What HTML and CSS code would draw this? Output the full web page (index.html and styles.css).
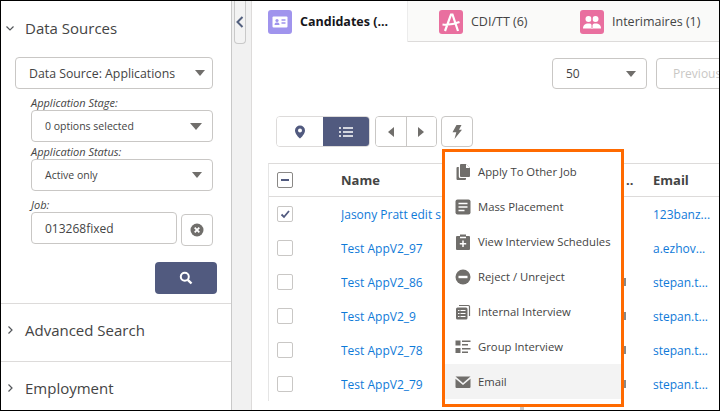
FILE: index.html
```html
<!DOCTYPE html>
<html lang="en">
<head>
<meta charset="utf-8">
<title>Candidates</title>
<link rel="stylesheet" href="styles.css">
</head>
<body>
<div class="frame">
  <aside class="sidebar">
    <section class="panel first">
      <h2 class="panel-title"><svg class="chev" viewBox="0 0 10 10"><path d="M1.500 3.500 5 7l3.500-3.500"/></svg>Data Sources</h2>
      <div class="select main-select"><span>Data Source: Applications</span><i class="caret"></i></div>
      <div class="fields">
        <label class="lbl">Application Stage:</label>
        <div class="select small"><span>0 options selected</span><i class="caret big"></i></div>
        <label class="lbl">Application Status:</label>
        <div class="select small"><span>Active only</span><i class="caret"></i></div>
        <label class="lbl job">Job:</label>
        <div class="job-row">
          <div class="select small job-input"><span>013268fixed</span></div>
          <button class="clear"><svg viewBox="0 0 14 14" width="14" height="14"><circle cx="7" cy="7" r="6.500" fill="#706e6b"/><path d="M4.700 4.700l4.600 4.600M9.300 4.700 4.700 9.300" stroke="#fff" stroke-width="1.800"/></svg></button>
        </div>
      </div>
      <div class="search-row"><button class="search"><svg viewBox="0 0 14 14" width="14" height="14"><circle cx="5.800" cy="5.800" r="4" fill="none" stroke="#fff" stroke-width="2"/><path d="M8.800 8.800 12.500 12.500" stroke="#fff" stroke-width="2.400"/></svg></button></div>
    </section>
    <section class="panel closed"><h2 class="panel-title"><svg class="chev" viewBox="0 0 10 10"><path d="M3.500 1.500 7 5 3.500 8.500"/></svg>Advanced Search</h2></section>
    <section class="panel closed last"><h2 class="panel-title"><svg class="chev" viewBox="0 0 10 10"><path d="M3.500 1.500 7 5 3.500 8.500"/></svg>Employment</h2></section>
  </aside>

  <div class="gutter"><div class="handle"><svg viewBox="0 0 8 12" width="8" height="12"><path d="M6.500 1 1.500 6l5 5" fill="none" stroke="#53607e" stroke-width="2"/></svg></div></div>

  <main class="main">
    <nav class="tabs">
      <div class="tab active">
        <span class="tab-icon purple"><svg viewBox="0 0 24 24" width="24" height="24"><rect x="4.500" y="6.500" width="15" height="11" rx="1" fill="#fff"/><circle cx="9" cy="10.500" r="1.600" fill="#a094ed"/><path d="M6.500 15c0-2 1.200-2.500 2.500-2.500s2.500.5 2.500 2.500z" fill="#a094ed"/><path d="M13.500 10h4M13.500 13h4" stroke="#a094ed" stroke-width="1.300"/></svg></span>
        <span class="tab-label">Candidates (...</span>
      </div>
      <div class="tab cdi">
        <span class="tab-icon pink"><svg viewBox="0 0 24 24" width="24" height="24"><path d="M6 21 12 4.500h1.500L19 21M3.500 14.500c6 .8 11-.2 17-2.500" fill="none" stroke="#fff" stroke-width="2.200"/></svg></span>
        <span class="tab-text">CDI/TT (6)</span>
      </div>
      <div class="tab inter">
        <span class="tab-icon pink"><svg viewBox="0 0 24 24" width="24" height="24"><g fill="#fff"><circle cx="8.500" cy="9" r="3"/><circle cx="15.500" cy="9" r="3"/><path d="M3 18.500c0-3.500 2-5 5.500-5s4 1.500 4 5z"/><path d="M11.500 18.500c0-3.500 1-5 4-5 3.500 0 5.500 1.500 5.500 5z"/></g><path d="M12 7v11" stroke="#e96f9f" stroke-width="1"/></svg></span>
        <span class="tab-text">Interimaires (1)</span>
      </div>
    </nav>

    <div class="pager">
      <div class="select pager-select"><span>50</span><i class="caret"></i></div>
      <button class="prev">Previous</button>
    </div>

    <div class="toolbar">
      <div class="btn-group views">
        <button class="view"><svg viewBox="0 0 12 14" width="12" height="14"><path fill="#515a7f" fill-rule="evenodd" d="M6 .5a5 5 0 0 1 5 5c0 3.300-3.600 7-5 8-1.400-1-5-4.700-5-8a5 5 0 0 1 5-5zm0 3a2 2 0 1 0 0 4 2 2 0 0 0 0-4z"/></svg></button>
        <button class="view on"><svg viewBox="0 0 14 10" width="14" height="10"><path d="M0 1h2M4 1h10M0 5h2M4 5h10M0 9h2M4 9h10" stroke="#fff" stroke-width="1.400"/></svg></button>
      </div>
      <div class="btn-group arrows">
        <button class="arrow"><i class="tri left"></i></button>
        <button class="arrow"><i class="tri right"></i></button>
      </div>
      <button class="bolt"><svg viewBox="0 0 10 14" width="10" height="14"><path fill="#706e6b" d="M4.500 0h5L7 4.800h3L2.500 14l1.800-6.800H.5z"/></svg></button>
    </div>

    <div class="table">
      <div class="row head">
        <div class="c-check"><span class="cb"><i class="dash"></i></span></div>
        <div class="c-name">Name</div>
        <div class="c-mid dots">..</div>
        <div class="c-email">Email</div>
      </div>
      <div class="row">
        <div class="c-check"><span class="cb"><svg viewBox="0 0 10 10" width="10" height="10"><path d="M1.500 5.500 4 8l5-6" fill="none" stroke="#515a7f" stroke-width="1.800"/></svg></span></div>
        <div class="c-name"><a>Jasony Pratt edit s</a></div>
        <div class="c-mid"></div>
        <div class="c-email"><a>123banz...</a></div>
      </div>
      <div class="row">
        <div class="c-check"><span class="cb"></span></div>
        <div class="c-name"><a>Test AppV2_97</a></div>
        <div class="c-mid"></div>
        <div class="c-email"><a>a.ezhov...</a></div>
      </div>
      <div class="row">
        <div class="c-check"><span class="cb"></span></div>
        <div class="c-name"><a>Test AppV2_86</a></div>
        <div class="c-mid"><i class="mark"></i></div>
        <div class="c-email"><a>stepan.t...</a></div>
      </div>
      <div class="row">
        <div class="c-check"><span class="cb"></span></div>
        <div class="c-name"><a>Test AppV2_9</a></div>
        <div class="c-mid"><i class="mark"></i></div>
        <div class="c-email"><a>stepan.t...</a></div>
      </div>
      <div class="row">
        <div class="c-check"><span class="cb"></span></div>
        <div class="c-name"><a>Test AppV2_78</a></div>
        <div class="c-mid"><i class="mark"></i></div>
        <div class="c-email"><a>stepan.t...</a></div>
      </div>
      <div class="row">
        <div class="c-check"><span class="cb"></span></div>
        <div class="c-name"><a>Test AppV2_79</a></div>
        <div class="c-mid"><i class="mark"></i></div>
        <div class="c-email"><a>stepan.t...</a></div>
      </div>
    </div>

    <ul class="menu">
      <li class="item"><svg viewBox="0 0 16 16" width="16" height="16"><path fill="#706e6b" d="M6 0h5l4 4v8a1 1 0 0 1-1 1H6a1 1 0 0 1-1-1V1a1 1 0 0 1 1-1zM3.800 3v9.500a1.500 1.500 0 0 0 1.500 1.500H11v1a1 1 0 0 1-1 1H2.500a1 1 0 0 1-1-1V4a1 1 0 0 1 1-1z"/><path fill="#fff" d="M11 0v4h4z"/></svg>Apply To Other Job</li>
      <li class="item"><svg viewBox="0 0 16 16" width="16" height="16"><rect x="0.500" y="0.500" width="15" height="15" rx="2" fill="#706e6b"/><path d="M3.500 4.500h9M3.500 8h9M3.500 11.500h6" stroke="#fff" stroke-width="1.500"/></svg>Mass Placement</li>
      <li class="item"><svg viewBox="0 0 16 16" width="16" height="16"><path fill="#706e6b" d="M2 2h3V.5h6V2h3a1 1 0 0 1 1 1v12a1 1 0 0 1-1 1H2a1 1 0 0 1-1-1V3a1 1 0 0 1 1-1z"/><path stroke="#fff" stroke-width="1.500" d="M8 6.500v6.500M4.800 9.800h6.400M5 3.500h6"/></svg>View Interview Schedules</li>
      <li class="item"><svg viewBox="0 0 16 16" width="16" height="16"><circle cx="8" cy="8" r="7.500" fill="#706e6b"/><rect x="3.500" y="6.800" width="9" height="2.400" fill="#fff"/></svg>Reject / Unreject</li>
      <li class="item"><svg viewBox="0 0 16 16" width="16" height="16"><path fill="none" stroke="#706e6b" stroke-width="1.200" d="M4 1.500h9.500a1 1 0 0 1 1 1V12"/><rect x="1" y="3.500" width="11.500" height="12" rx="1.500" fill="#706e6b"/><path stroke="#fff" stroke-width="1.100" d="M3 6.500h1.500M5.500 6.500h5M3 9.500h1.500M5.500 9.500h5M3 12.500h1.500M5.500 12.500h5"/></svg>Internal Interview</li>
      <li class="item"><svg viewBox="0 0 16 16" width="16" height="16"><g fill="#706e6b"><rect x="0.500" y="1.500" width="5" height="5"/><rect x="0.500" y="9" width="5" height="5"/><rect x="7" y="1.500" width="8.500" height="1.500"/><rect x="7" y="5" width="6" height="1.500"/><rect x="7" y="9" width="8.500" height="1.500"/><rect x="7" y="12.500" width="6" height="1.500"/></g></svg>Group Interview</li>
      <li class="item hover"><svg viewBox="0 0 16 16" width="16" height="16"><path fill="#706e6b" d="M0.500 2.500h15L8 9zM0.500 4.800 8 11l7.500-6.200V13a1 1 0 0 1-1 1h-13a1 1 0 0 1-1-1z"/></svg>Email</li>
    </ul>
    <i class="menu-tail"></i>
  </main>
</div>
</body>
</html>
```

FILE: styles.css
```css
* { box-sizing: border-box; }
html, body { margin: 0; padding: 0; }
body {
  width: 720px;
  height: 411px;
  overflow: hidden;
  background: #fff;
  font-family: "Open Sans", "Noto Sans", sans-serif;
  color: #3e3e3c;
}
.frame {
  display: flex;
  width: 720px;
  height: 411px;
  border: 1px solid #000;
  overflow: hidden;
  position: relative;
}
button { font: inherit; background: #fff; padding: 0; cursor: pointer; }

/* Sidebar */
.sidebar {
  width: 231px;
  flex: none;
  background: #fff;
  border-right: 1px solid #c9c9c9;
}
.panel-title {
  margin: 0;
  display: flex;
  align-items: center;
  font-size: 15px;
  font-weight: 400;
  line-height: 20px;
  color: #444;
}
.chev {
  width: 10px;
  height: 10px;
  margin: 0 10px 0 4px;
  fill: none;
  stroke: #53565a;
  stroke-width: 1.200;
}
.panel.first {
  padding-top: 17px;
  height: 303px;
  border-bottom: 1px solid #dddbda;
}
.panel.closed {
  height: 58px;
  padding-top: 16px;
  border-bottom: 1px solid #dddbda;
}
.panel.last { border-bottom: 0; }
.select {
  display: flex;
  align-items: center;
  justify-content: space-between;
  height: 32px;
  border: 1px solid #c9c7c5;
  border-radius: 4px;
  background: #fff;
  color: #444;
  font-size: 12px;
}
.main-select {
  width: 198px;
  margin: 19px 0 0 14px;
  padding: 0 7px 0 13px;
  font-size: 12.300px;
}
.fields { margin: 6px 0 0 30px; width: 182px; }
.lbl {
  display: block;
  font-size: 11px;
  font-style: italic;
  line-height: 15px;
  height: 15px;
  color: #444;
}
.select.small { padding: 0 10px 0 13px; font-size: 10.500px; margin-bottom: 2px; }
.lbl.job { margin-top: 6px; }
.job-row { display: flex; align-items: flex-start; gap: 4px; }
.select.job-input { width: 146px; font-size: 12px; margin-bottom: 0; }
.clear {
  width: 32px;
  height: 32px;
  margin-top: 2px;
  border: 1px solid #c9c7c5;
  border-radius: 4px;
  display: flex;
  align-items: center;
  justify-content: center;
}
.caret {
  display: block;
  width: 0;
  height: 0;
  border-left: 5px solid transparent;
  border-right: 5px solid transparent;
  border-top: 6px solid #706e6b;
}
.caret.big { border-left-width: 6px; border-right-width: 6px; border-top-width: 7px; }
.search-row { display: flex; justify-content: flex-end; padding: 16px 14px 0 0; }
.search {
  width: 62px;
  height: 32px;
  background: #515a7f;
  border: 0;
  border-radius: 4px;
  display: flex;
  align-items: center;
  justify-content: center;
}

/* Gutter */
.gutter { width: 20px; flex: none; background: #f1f1f1; border-right: 1px solid #dddbda; }
.handle {
  width: 12px;
  height: 44px;
  margin-left: 2px;
  margin-top: -1px;
  background: #f3f3f3;
  border: 1px solid #c9c9c9;
  border-top: 0;
  border-radius: 0 0 4px 4px;
  display: flex;
  align-items: center;
  justify-content: center;
}

/* Main */
.main { flex: 1; min-width: 0; position: relative; background: #fff; }
.tabs {
  display: flex;
  height: 41px;
  background: #fafaf9;
  border-bottom: 1px solid #dddbda;
}
.tab { display: flex; align-items: center; height: 41px; font-size: 12.500px; color: #444; }
.tab.active { width: 155px; padding-left: 16px; background: #fff; box-shadow: 1px 0 0 #ececec; }
.tab.cdi { width: 141px; padding-left: 32px; }
.tab.inter { padding-left: 32px; }
.tab-icon { width: 24px; height: 24px; border-radius: 3px; display: block; flex: none; margin-right: 8px; }
.tab-icon svg { display: block; }
.purple { background: #a094ed; }
.pink { background: #e96f9f; }
.tab-label { font-weight: 700; color: #16161a; font-size: 12.500px; }

.pager { display: flex; gap: 9px; padding: 16px 0 0 300px; height: 47px; width: 470px; }
.pager-select { width: 95px; flex: none; height: 31px; padding: 0 10px 0 13px; font-size: 12px; }
.prev {
  flex: none;
  width: 90px;
  height: 31px;
  text-align: left;
  padding-left: 16px;
  font-size: 12px;
  color: #c9c7c5;
  border: 1px solid #c9c7c5;
  border-radius: 4px;
}

.toolbar { display: flex; gap: 5px; padding: 27px 0 0 24px; height: 74px; }
.btn-group { display: flex; height: 31px; border: 1px solid #c9c7c5; border-radius: 4px; overflow: hidden; }
.views { width: 94px; border-color: #dddbda; }
.view { flex: 1; border: 0; display: flex; align-items: center; justify-content: center; }
.view.on { background: #515a7f; }
.arrows { width: 62px; }
.arrow { flex: 1; border: 0; display: flex; align-items: center; justify-content: center; }
.arrow + .arrow { border-left: 1px solid #c9c7c5; }
.tri { display: block; width: 0; height: 0; border-top: 5px solid transparent; border-bottom: 5px solid transparent; }
.tri.left { border-right: 6px solid #706e6b; }
.tri.right { border-left: 6px solid #706e6b; }
.bolt {
  width: 32px;
  height: 31px;
  margin-left: -1px;
  border: 1px solid #c9c7c5;
  border-radius: 4px;
  display: flex;
  align-items: center;
  justify-content: center;
}

/* Table */
.table { margin-left: 16px; border-top: 1px solid #dddbda; border-left: 1px solid #e5e5e5; width: 460px; }
.row { display: flex; align-items: center; height: 34px; font-size: 12px; }
.row.head { height: 33px; border-bottom: 1px solid #dddbda; font-weight: 700; font-size: 13px; color: #444; }
.c-check { width: 72px; flex: none; padding-left: 8px; }
.c-name { width: 282px; flex: none; white-space: nowrap; overflow: hidden; }
.c-mid { width: 30px; flex: none; padding-left: 1px; line-height: 1; }
.c-mid.dots { padding-left: 3px; }
.c-email { flex: 1; white-space: nowrap; }
.row a { color: #0f7ad8; }
.cb {
  width: 16px;
  height: 16px;
  display: flex;
  align-items: center;
  justify-content: center;
  border: 1px solid #c9c7c5;
  border-radius: 2px;
  background: #fff;
}
.head .cb { border-color: #8a8886; }
.dash { display: block; width: 8px; height: 2px; background: #515a7f; }
.mark { display: block; width: 2px; height: 8px; background: #8a8886; }

/* Action menu */
.menu {
  position: absolute;
  left: 190px;
  top: 148px;
  width: 182px;
  height: 258px;
  margin: 0;
  padding: 2px 0 0;
  list-style: none;
  background: #fff;
  border: 3px solid #ff6a00;
}
.item {
  display: flex;
  align-items: center;
  gap: 7px;
  height: 35px;
  padding-left: 10px;
  font-size: 11.300px;
  color: #444;
  white-space: nowrap;
}
.item svg { flex: none; }
.item.hover { background: #f3f3f3; }
.menu-tail { position: absolute; left: 268px; top: 406px; width: 4px; height: 3px; background: #c9c9c9; }
```
